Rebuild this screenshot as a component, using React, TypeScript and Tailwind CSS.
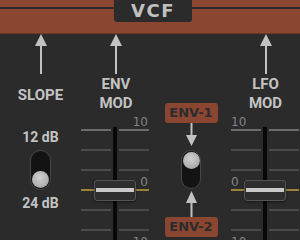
import React from "react";

const ArrowUp = ({ w, h, head }: { w: number; h: number; head: number }) => (
  <svg width={w} height={h} viewBox={`0 0 ${w} ${h}`} className="block">
    <polygon points={`${w / 2},0 ${w},${head} 0,${head}`} fill="#c2c2c2" />
    <rect x={w / 2 - 1} y={head - 0.5} width={2} height={h - head + 0.5} fill="#c2c2c2" />
  </svg>
);

const ArrowDown = ({ w, h, head }: { w: number; h: number; head: number }) => (
  <svg width={w} height={h} viewBox={`0 0 ${w} ${h}`} className="block">
    <rect x={w / 2 - 1} y={0} width={2} height={h - head + 0.5} fill="#c2c2c2" />
    <polygon points={`0,${h - head} ${w},${h - head} ${w / 2},${h}`} fill="#c2c2c2" />
  </svg>
);

const Toggle = ({ w, h, down }: { w: string; h: string; down: boolean }) => (
  <div
    className={`${w} ${h} rounded-full border border-[#474747] bg-[#131313] flex flex-col items-center p-[1px] ${
      down ? "justify-end" : "justify-start"
    }`}
  >
    <div className="w-[17px] h-[17px] rounded-full bg-[radial-gradient(circle_at_45%_40%,#cfcfcf_0%,#b4b4b4_55%,#8a8a8a_100%)]" />
  </div>
);

type Tick = { label?: string; color: string; h: string };

const ticks: Tick[] = [
  { label: "10", color: "bg-[#6c6c6c]", h: "h-[18px]" },
  { color: "bg-[#4a4a4a]", h: "h-[20px]" },
  { color: "bg-[#4a4a4a]", h: "h-[20px]" },
  { label: "0", color: "bg-[#9c8237]", h: "h-[20px]" },
  { color: "bg-[#4a4a4a]", h: "h-[20px]" },
  { color: "bg-[#4a4a4a]", h: "h-[20px]" },
  { label: "10", color: "bg-[#6c6c6c]", h: "h-[20px]" },
];

const TickColumn = ({ showLabels, align }: { showLabels: boolean; align: "left" | "right" }) => (
  <div className="w-[30px] flex flex-col">
    {ticks.map((t, i) => (
      <div key={i} className={`${t.h} flex flex-col justify-end`}>
        {showLabels && t.label ? (
          <div
            className={`text-[12px] leading-[12px] mb-[1px] text-[#838383] ${
              align === "right" ? "text-right pr-[1px]" : "text-left"
            }`}
            style={{ fontFamily: '"DejaVu Sans", sans-serif' }}
          >
            {t.label}
          </div>
        ) : null}
        <div className={`h-[2px] w-full ${t.color}`} />
      </div>
    ))}
  </div>
);

const Fader = ({ labelSide }: { labelSide: "left" | "right" }) => (
  <div className="relative flex w-[68px] h-[140px]">
    <TickColumn showLabels={labelSide === "left"} align="left" />
    <div className="w-[8px] flex justify-center">
      <div className="w-[4px] mt-[14px] h-[130px] bg-[#080808]" />
    </div>
    <TickColumn showLabels={labelSide === "right"} align="right" />
    <div className="absolute left-[13px] top-[67px] w-[42px] h-[21px] rounded-[3px] border border-[#555555] bg-[#2e2e2e] shadow-[0_1px_2px_rgba(0,0,0,0.5)] px-[1px] pt-[7px]">
      <div className="h-[4px] w-full bg-[#c9c9c9]" />
    </div>
  </div>
);

const labelFont = { fontFamily: 'Roboto, "Liberation Sans", sans-serif' };
const badgeFont = { fontFamily: '"DejaVu Sans", sans-serif' };

const Badge = ({ text }: { text: string }) => (
  <div
    className="w-[53px] h-[20px] rounded-[3px] bg-[#8b4632] text-[#2c2c2c] text-[13px] font-bold leading-[20px] text-center"
    style={badgeFont}
  >
    {text}
  </div>
);

export default function App() {
  return (
    <div className="w-[300px] h-[240px] overflow-hidden bg-[#2b2b2b] flex flex-col">
      {/* top band */}
      <div className="h-[34px] bg-[#8b4632] border-b border-[#6c3626] flex items-start shrink-0">
        <div className="w-[114px] mt-[7px] h-[2px] bg-[#2b2b2b]" />
        <div
          className="w-[78px] h-[22px] rounded-b-[3px] bg-[#2b2b2b] text-[#c0c0c0] text-[18px] font-bold leading-[22px] text-center tracking-[1.5px]"
          style={badgeFont}
        >
          VCF
        </div>
        <div className="flex-1 mt-[7px] h-[2px] bg-[#2b2b2b]" />
      </div>

      <div className="grid grid-cols-[81px_68px_82px_69px] items-start">
        {/* SLOPE */}
        <div className="flex flex-col items-center text-[#c3c3c3] font-bold" style={labelFont}>
          <ArrowUp w={12} h={40} head={12} />
          <div className="mt-[13px] text-[15px] leading-[16px]">SLOPE</div>
          <div className="mt-[26px] text-[14px] leading-[16px]">12 dB</div>
          <div className="mt-[5px]">
            <Toggle w="w-[21px]" h="h-[40px]" down={true} />
          </div>
          <div className="mt-[5px] text-[14px] leading-[16px]">24 dB</div>
        </div>

        {/* ENV MOD */}
        <div className="flex flex-col items-center">
          <div className="ml-[2px]">
            <ArrowUp w={12} h={40} head={12} />
          </div>
          <div
            className="ml-[2px] mt-[1px] text-[15px] leading-[19px] font-bold text-center text-[#c3c3c3]"
            style={labelFont}
          >
            ENV
            <br />
            MOD
          </div>
          <Fader labelSide="right" />
        </div>

        {/* ENV switch */}
        <div className="flex flex-col items-center pl-[2px]">
          <div className="mt-[69px]">
            <Badge text="ENV-1" />
          </div>
          <ArrowDown w={11} h={23} head={11} />
          <div className="mt-[4px]">
            <Toggle w="w-[20px]" h="h-[39px]" down={false} />
          </div>
          <div className="mt-[2px]">
            <ArrowUp w={11} h={26} head={12} />
          </div>
          <Badge text="ENV-2" />
        </div>

        {/* LFO MOD */}
        <div className="flex flex-col items-start">
          <div className="ml-[29px]">
            <ArrowUp w={12} h={40} head={12} />
          </div>
          <div
            className="self-center mt-[1px] text-[15px] leading-[19px] font-bold text-center text-[#c3c3c3]"
            style={labelFont}
          >
            LFO
            <br />
            MOD
          </div>
          <Fader labelSide="left" />
        </div>
      </div>
    </div>
  );
}
